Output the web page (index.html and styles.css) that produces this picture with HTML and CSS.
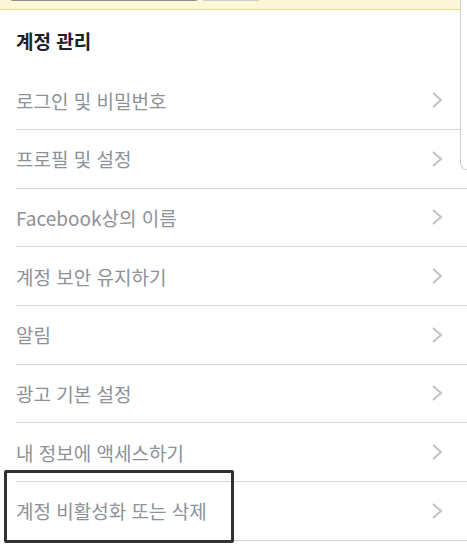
FILE: index.html
```html
<!DOCTYPE html>
<html lang="ko">
<head>
<meta charset="utf-8">
<link rel="stylesheet" href="styles.css">
</head>
<body>
<div class="banner">
  <div class="field"></div>
  <div class="btn"></div>
</div>
<div class="side-panel"></div>
<section class="settings">
  <h2 class="title">계정 관리</h2>
  <ul class="list">
    <li class="row"><span>로그인 및 비밀번호</span><svg class="chev" viewBox="0 0 12 18"><path d="M2 2 L10 9 L2 16"/></svg></li>
    <li class="row"><span>프로필 및 설정</span><svg class="chev" viewBox="0 0 12 18"><path d="M2 2 L10 9 L2 16"/></svg></li>
    <li class="row"><span>Facebook상의 이름</span><svg class="chev" viewBox="0 0 12 18"><path d="M2 2 L10 9 L2 16"/></svg></li>
    <li class="row"><span>계정 보안 유지하기</span><svg class="chev" viewBox="0 0 12 18"><path d="M2 2 L10 9 L2 16"/></svg></li>
    <li class="row"><span>알림</span><svg class="chev" viewBox="0 0 12 18"><path d="M2 2 L10 9 L2 16"/></svg></li>
    <li class="row"><span>광고 기본 설정</span><svg class="chev" viewBox="0 0 12 18"><path d="M2 2 L10 9 L2 16"/></svg></li>
    <li class="row"><span>내 정보에 액세스하기</span><svg class="chev" viewBox="0 0 12 18"><path d="M2 2 L10 9 L2 16"/></svg></li>
    <li class="row"><span>계정 비활성화 또는 삭제</span><svg class="chev" viewBox="0 0 12 18"><path d="M2 2 L10 9 L2 16"/></svg></li>
  </ul>
</section>
<div class="highlight"></div>
</body>
</html>
```
FILE: styles.css
```css
html, body {
  margin: 0;
  padding: 0;
  background: #fff;
  font-family: "Noto Sans CJK KR", "Noto Sans", sans-serif;
  overflow: hidden;
}
body {
  position: relative;
  width: 467px;
  height: 545px;
}
.banner {
  height: 9px;
  background: #fcf7d9;
  border-bottom: 1px solid #e8dc8e;
  display: flex;
  align-items: flex-end;
  gap: 3px;
  padding-left: 10px;
  overflow: hidden;
}
.field {
  width: 188px;
  height: 20px;
  margin-bottom: 8px;
  border: 1px solid #8f8f86;
  border-top: none;
  border-radius: 0 0 3px 3px;
  background: #fff;
  box-sizing: border-box;
}
.btn {
  width: 60px;
  height: 20px;
  margin-bottom: 8px;
  border: 1px solid #cfcfc8;
  border-top: none;
  border-radius: 0 0 4px 4px;
  background: #f4f2e8;
  box-sizing: border-box;
}
.side-panel {
  position: absolute;
  left: 460px;
  top: 0;
  width: 7px;
  height: 170px;
  box-sizing: border-box;
  border-left: 1px solid #cfd1d4;
  border-bottom: 1px solid #cfd1d4;
  border-radius: 0 0 0 8px;
  background: #fff;
  z-index: 2;
}
.settings {
  padding-left: 16px;
}
.title {
  margin: 0;
  height: 61.4px;
  display: flex;
  align-items: center;
  font-size: 19px;
  font-weight: 700;
  color: #1d2129;
}
.list {
  list-style: none;
  margin: 0;
  padding: 0;
}
.row {
  height: 58.65px;
  box-sizing: border-box;
  border-bottom: 1px solid #d3d5d8;
  display: flex;
  align-items: center;
  justify-content: space-between;
  padding-right: 24px;
  font-size: 19px;
  color: #8d9198;
}
.chev {
  width: 12px;
  height: 18px;
  fill: none;
  stroke: #bfc3c8;
  stroke-width: 2;
}
.highlight {
  position: absolute;
  left: 4px;
  top: 470px;
  width: 230px;
  height: 73px;
  box-sizing: border-box;
  border: 3px solid #313131;
  border-radius: 2px;
  z-index: 3;
}
```
